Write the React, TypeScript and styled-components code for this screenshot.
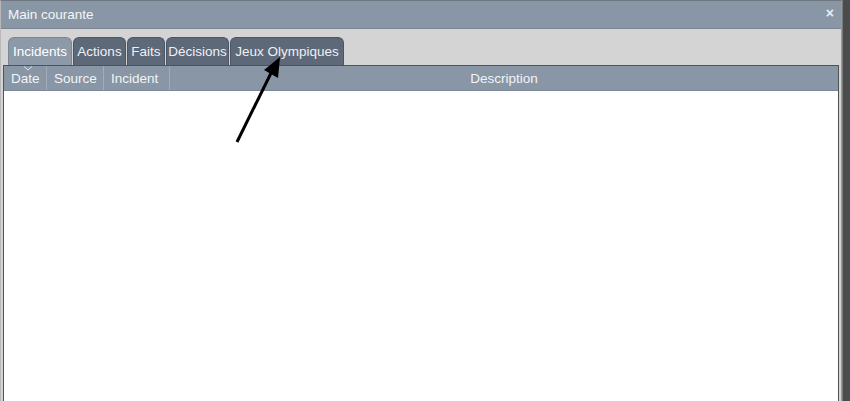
import styled, { createGlobalStyle } from "styled-components";

const GlobalStyle = createGlobalStyle`
  html, body {
    margin: 0;
    padding: 0;
    height: 100%;
    overflow: hidden;
    background: #d4d4d4;
  }
  #root {
    height: 100%;
  }
`;

const Page = styled.div`
  display: flex;
  height: 401px;
  width: 850px;
  font-family: Tahoma, "Liberation Sans", "DejaVu Sans", sans-serif;
  font-size: 13px;
`;

const Window = styled.div`
  position: relative;
  flex: 1;
  display: flex;
  flex-direction: column;
  border-top: 1px solid #6e7680;
  border-left: 1px solid #b8b8b8;
  border-right: 1px solid #9a9a9a;
  background: #d4d4d4;
`;

const TitleBar = styled.div`
  height: 27px;
  display: flex;
  align-items: center;
  justify-content: space-between;
  padding: 0 7px 0 7px;
  background: #8996a6;
  color: #f4f6f8;
  font-size: 13.5px;
  border-bottom: 1px solid #7b8898;
`;

const Close = styled.span`
  font-size: 14px;
  font-weight: bold;
  color: #e8ecf0;
  margin-top: -3px;
`;

const Body = styled.div`
  flex: 1;
  display: flex;
  flex-direction: column;
  padding: 8px 2px 0 2px;
`;

const Tabs = styled.div`
  display: flex;
  padding-left: 5px;
  gap: 1px;
`;

const Tab = styled.div<{ $active?: boolean; $w: number }>`
  width: ${(p) => p.$w}px;
  height: 28px;
  display: flex;
  align-items: center;
  justify-content: center;
  font-size: 13.5px;
  white-space: nowrap;
  border-radius: 6px 6px 0 0;
  background: ${(p) => (p.$active ? "#8c99a9" : "#5d6878")};
  color: ${(p) => (p.$active ? "#ffffff" : "#eef1f4")};
  border: 1px solid ${(p) => (p.$active ? "#7a8797" : "#4c5665")};
  border-bottom: none;
  box-sizing: border-box;
`;

const Table = styled.div`
  flex: 1;
  display: flex;
  flex-direction: column;
  border: 1px solid #4f5357;
  border-bottom: none;
  background: #ffffff;
`;

const HeaderRow = styled.div`
  display: flex;
  height: 24px;
  background: #8896a6;
  border-bottom: 1px solid #7b8898;
`;

const HeadCell = styled.div<{ $w?: number }>`
  position: relative;
  flex: ${(p) => (p.$w ? `0 0 ${p.$w}px` : "1")};
  display: flex;
  align-items: center;
  justify-content: ${(p) => (p.$w ? "flex-start" : "center")};
  padding-left: ${(p) => (p.$w ? "7px" : "0")};
  box-sizing: border-box;
  font-size: 13.5px;
  color: #f2f4f7;
  border-right: 1px solid #a2adb9;
  &:last-child {
    border-right: none;
  }
`;

const SortMark = styled.svg`
  position: absolute;
  top: 0;
  left: 19px;
`;

const Strip = styled.div`
  width: 7px;
  background: #4c4c4c;
  border-left: 1px solid #7a7a7a;
`;

const Arrow = styled.svg`
  position: absolute;
  left: 230px;
  top: 52px;
  pointer-events: none;
`;

const tabs = [
  { label: "Incidents", w: 64 },
  { label: "Actions", w: 53 },
  { label: "Faits", w: 38 },
  { label: "Décisions", w: 63 },
  { label: "Jeux Olympiques", w: 114 },
];

export default function App() {
  return (
    <>
      <GlobalStyle />
      <Page>
        <Window>
          <TitleBar>
            <span>Main courante</span>
            <Close>×</Close>
          </TitleBar>
          <Body>
            <Tabs>
              {tabs.map((t, i) => (
                <Tab key={t.label} $w={t.w} $active={i === 0}>
                  {t.label}
                </Tab>
              ))}
            </Tabs>
            <Table>
              <HeaderRow>
                <HeadCell $w={43}>
                  Date
                  <SortMark width="10" height="5" viewBox="0 0 10 5">
                    <path d="M1 0.5 L5 4 L9 0.5" fill="none" stroke="#dfe4ea" strokeWidth="1" />
                  </SortMark>
                </HeadCell>
                <HeadCell $w={57}>Source</HeadCell>
                <HeadCell $w={66}>Incident</HeadCell>
                <HeadCell>Description</HeadCell>
              </HeaderRow>
            </Table>
          </Body>
          <Arrow width="60" height="95" viewBox="0 0 60 95">
            <line x1="6" y1="89" x2="42" y2="16" stroke="#000" strokeWidth="3" />
            <polygon points="49,4 33,17 47,25" fill="#000" />
          </Arrow>
        </Window>
        <Strip />
      </Page>
    </>
  );
}
